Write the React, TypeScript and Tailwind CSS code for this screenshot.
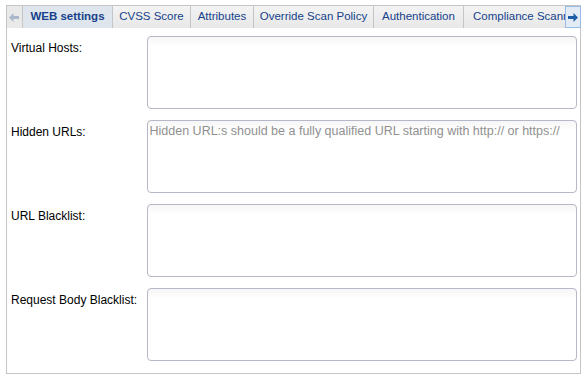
import React from 'react';

const tabs = [
  { label: 'WEB settings', w: 'w-[90px]', active: true },
  { label: 'CVSS Score', w: 'w-[78px]' },
  { label: 'Attributes', w: 'w-[63px]' },
  { label: 'Override Scan Policy', w: 'w-[120px]' },
  { label: 'Authentication', w: 'w-[90px]' },
  { label: 'Compliance Scanning', w: 'w-[102px]' },
];

const fields = [
  { label: 'Virtual Hosts:', placeholder: '' },
  {
    label: 'Hidden URLs:',
    placeholder:
      'Hidden URL:s should be a fully qualified URL starting with http:// or https://',
  },
  { label: 'URL Blacklist:', placeholder: '' },
  { label: 'Request Body Blacklist:', placeholder: '' },
];

const font = { fontFamily: 'Tahoma, "Liberation Sans", Arial, sans-serif' };

const Arrow = ({ dir, color }: { dir: 'left' | 'right'; color: string }) => (
  <svg width="10" height="9" viewBox="0 0 10 9">
    {dir === 'left' ? (
      <path d="M0 4.5 L4.5 0 V3 H10 V6 H4.5 V9 Z" fill={color} />
    ) : (
      <path d="M10 4.5 L5.5 0 V3 H0 V6 H5.5 V9 Z" fill={color} />
    )}
  </svg>
);

export default function App() {
  return (
    <div className="w-[587px] h-[379px] bg-white pt-[5px] px-[6px] text-[12px]" style={font}>
      <div className="flex h-[23px] w-[575px] border-t border-[#c5c5c5] bg-[#f0f0f0]">
        <div className="flex h-full w-[17px] items-center justify-center border-l border-r border-[#c5c5c5] bg-[#e9e9e9]">
          <Arrow dir="left" color="#a9b8cb" />
        </div>
        <div className="flex h-full w-[543px] overflow-hidden">
          {tabs.map((t) => (
            <div
              key={t.label}
              className={
                t.active
                  ? `${t.w} shrink-0 flex h-full items-center justify-center border-r border-[#c5c5c5] bg-[#dfe5ec] text-[11.5px] font-bold text-[#15428b] whitespace-nowrap`
                  : `${t.w} shrink-0 flex h-[23px] items-center justify-center border-r border-b border-[#c5c5c5] bg-gradient-to-b from-[#f3f3f3] to-[#e8e8e8] text-[11.5px] text-[#15428b] whitespace-nowrap overflow-hidden`
              }
            >
              <span className={t.label === 'Compliance Scanning' ? 'pl-[9px] w-full' : ''}>{t.label}</span>
            </div>
          ))}
        </div>
        <div className="flex h-full w-[16px] items-center justify-center border border-[#99bbe8] bg-[#e3ebf5]">
          <Arrow dir="right" color="#1c5fa8" />
        </div>
      </div>
      <div className="w-[575px] h-[346px] border-l border-r border-b border-[#c5c5c5] pt-[8px] pr-[3px] flex flex-col gap-[11px]">
        {fields.map((f) => (
          <div key={f.label} className="flex">
            <div className="w-[140px] pl-[4px] pt-[3px] text-black whitespace-nowrap">{f.label}</div>
            <textarea
              className="w-[432px] h-[73px] resize-none rounded-[4px] border border-[#b5b8c8] bg-gradient-to-b from-[#f6f6f6] to-white to-[10px] px-[2px] py-[1px] text-[12.5px] text-black placeholder:text-[#909090] outline-none"
              style={font}
              placeholder={f.placeholder}
            />
          </div>
        ))}
      </div>
    </div>
  );
}
